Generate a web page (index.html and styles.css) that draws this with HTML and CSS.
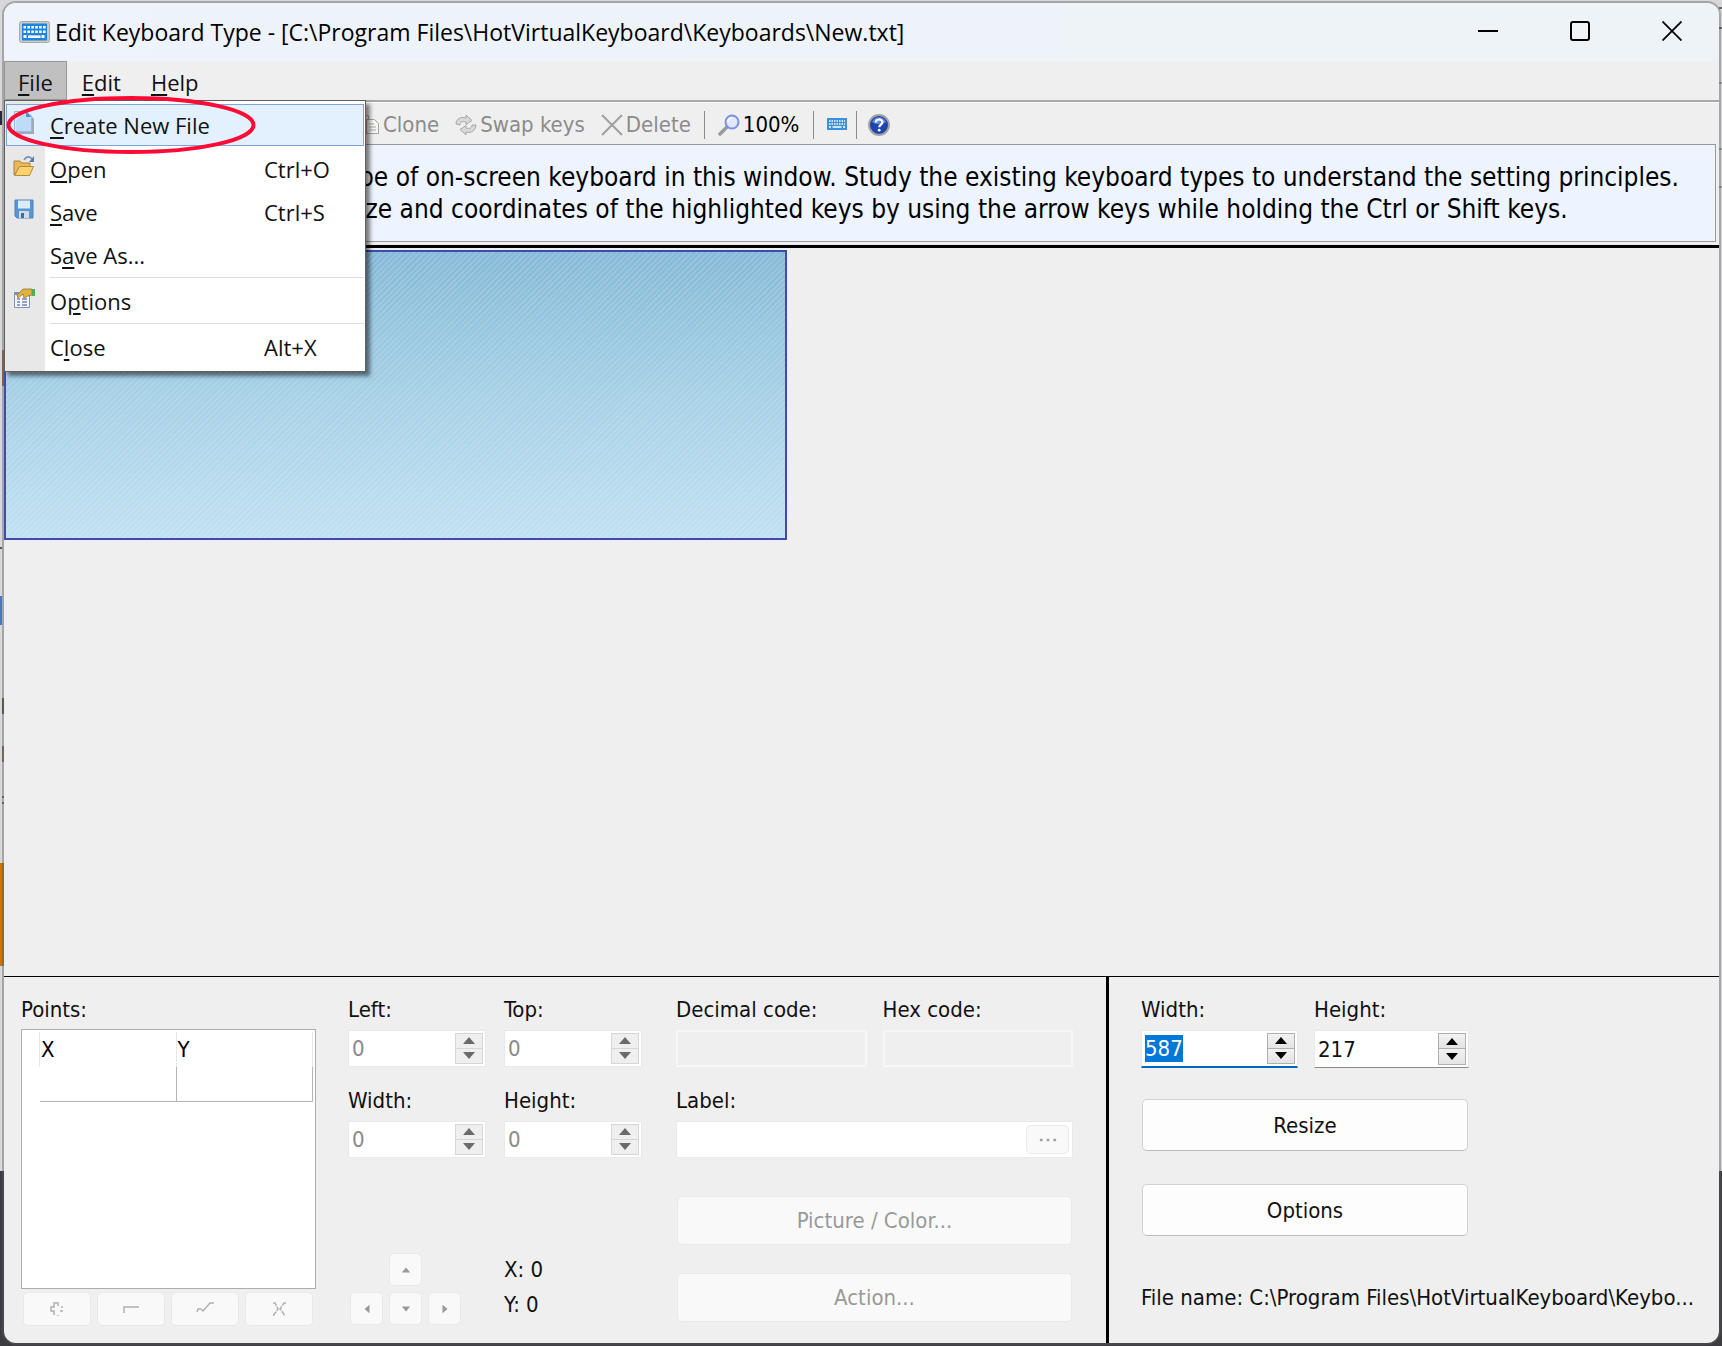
FILE: index.html
```html
<!DOCTYPE html>
<html lang="en">
<head>
<meta charset="utf-8">
<title>Edit Keyboard Type</title>
<link rel="stylesheet" href="styles.css">
</head>
<body>
<main class="window">
  <header class="titlebar">
    <svg class="app-icon" viewBox="0 0 31 22" aria-hidden="true">
      <rect x=".5" y=".5" width="30" height="21" rx="2" fill="#cfc9c2" stroke="#a9a9a9"/>
      <rect x="3" y="2.500" width="25" height="17" fill="#1f83e0"/>
      <g stroke="#fff" stroke-width="2.600" stroke-dasharray="2.600 1.300"><path d="M4.500 6.300h22.500M4.500 10.700h22.500"/></g>
      <path d="M4.500 15.500h3M22.500 15.500h4" stroke="#fff" stroke-width="3" stroke-dasharray="3 1"/>
      <path d="M9 15.700h12.500" stroke="#fff" stroke-width="2.600"/>
    </svg>
    <h1 class="title">Edit Keyboard Type - [C:\Program Files\HotVirtualKeyboard\Keyboards\New.txt]</h1>
    <div class="caption">
      <button type="button" aria-label="Minimize"><svg viewBox="0 0 20 20"><path d="M0 10h20" stroke-width="2"/></svg></button>
      <button type="button" aria-label="Maximize"><svg viewBox="0 0 20 20"><rect x="1" y="1" width="18" height="18" rx="2" stroke-width="2"/></svg></button>
      <button type="button" aria-label="Close window"><svg viewBox="0 0 20 20"><path d="M.5.5l19 19M19.500.5l-19 19" stroke-width="1.800"/></svg></button>
    </div>
  </header>

  <nav class="menubar">
    <div class="menu-root">
      <button type="button" class="menu-title open"><u>F</u>ile</button>
      <ul class="popup">
        <li><button type="button" class="item active">
          <svg class="ico" viewBox="0 0 24 24"><path d="M5 3h13l4 5v15H5z" fill="#a4a9b8"/><path d="M2.500.5h12l5 5v15h-17z" fill="#d9ebfb" stroke="#9cb6de"/><path d="M4 9l8-7 3 4 4 1v13H4z" fill="#bfdcf7"/><path d="M14 .5v5.500h5.500z" fill="#4b8fd8"/></svg>
          <span><u>C</u>reate New File</span></button>
          <svg class="highlight-ring" viewBox="0 0 250 60" aria-hidden="true"><ellipse cx="125" cy="30" rx="122.500" ry="27" fill="none" stroke="#fd0a35" stroke-width="4"/></svg>
        </li>
        <li><button type="button" class="item">
          <svg class="ico" viewBox="0 0 24 24"><path d="M2 20V6h6l2 2h8v4H8z" fill="#e9b95a" stroke="#b08435"/><path d="M2.500 20.500l5-9h14l-4 9z" fill="#fbd36c" stroke="#b58a3c"/><path d="M12 5c2-4 6-4 8-1" fill="none" stroke="#6f8fb8" stroke-width="1.600"/><path d="M22 1v6h-5z" fill="#587ba8"/></svg>
          <span><u>O</u>pen</span><kbd>Ctrl+O</kbd></button></li>
        <li><button type="button" class="item">
          <svg class="ico" viewBox="0 0 24 24"><path d="M3 2h18v18H5l-2-2z" fill="#5795d3" stroke="#4c84bd"/><path d="M6 2.500h12v8H6z" fill="#dcebf8"/><path d="M7 13h10v7H7z" fill="#d5dbe3"/><path d="M9 15h3v5H9z" fill="#3d6ea8"/></svg>
          <span><u>S</u>ave</span><kbd>Ctrl+S</kbd></button></li>
        <li><button type="button" class="item"><i class="ico"></i><span>S<u>a</u>ve As...</span></button></li>
        <li class="rule"></li>
        <li><button type="button" class="item">
          <svg class="ico" viewBox="0 0 24 24"><path d="M2.500 5.500h15v15h-15z" fill="#f2f6fc" stroke="#7f92b5"/><path d="M2 5h16v3H2z" fill="#7c93c2"/><path d="M5 12h3M10 12h5M5 15h3M10 15h5M5 18h3M10 18h5" stroke="#6f86ad" stroke-width="1.400"/><path d="M5 8l6-6h9v6l-4 1-4 2-1-4-5 4z" fill="#e0b040" stroke="#9b762a" stroke-width=".8"/><path d="M20 2h3v7h-3z" fill="#4caf50"/></svg>
          <span>O<u>p</u>tions</span></button></li>
        <li class="rule"></li>
        <li><button type="button" class="item"><i class="ico"></i><span>C<u>l</u>ose</span><kbd>Alt+X</kbd></button></li>
      </ul>
    </div>
    <button type="button" class="menu-title"><u>E</u>dit</button>
    <button type="button" class="menu-title"><u>H</u>elp</button>
  </nav>

  <div class="toolbar">
    <button type="button" disabled><svg viewBox="0 0 22 22"><path d="M2.500 1.500h8v14h-8z" fill="#eee" stroke="#aaa"/><path d="M8.500 5.500h8l4 4v10h-12z" fill="#f4f4f4" stroke="#a5a5a5"/><path d="M11 10h5M11 13h7M11 16h7" stroke="#aaa"/></svg>Clone</button>
    <button type="button" disabled><svg viewBox="0 0 22 22"><g fill="#d8d8d8" stroke="#a2a2a2" stroke-width=".9" stroke-linejoin="round"><path d="M1 10c0-5 5-8 10-6V1l6 5.500-6 4V8c-4-1-6 0-6 3z"/><path d="M21 11c0 5-5 9-10 7v3l-6-5.500 6-4V14c4 1 6 0 6-3z"/></g></svg>Swap keys</button>
    <button type="button" disabled><svg viewBox="0 0 22 22"><path d="M1 1l20 20M21 1L1 21" fill="none" stroke="#a0a0a0" stroke-width="2"/></svg>Delete</button>
    <i class="sep"></i>
    <button type="button"><svg viewBox="0 0 22 22"><path d="M2 20l7-7" stroke="#9a9a9a" stroke-width="3.500" stroke-linecap="round"/><circle cx="14" cy="8" r="6.500" fill="#dfe8fc" stroke="#7d8fe6" stroke-width="2"/><path d="M10 8a4 4 0 0 1 4-4" fill="none" stroke="#fff" stroke-width="1.500"/></svg>100%</button>
    <i class="sep wide"></i>
    <button type="button" aria-label="Keyboard"><svg viewBox="0 0 22 22"><path d="M1 4h20v12H1z" fill="#3b8fdb"/><g stroke="#fff" stroke-width="1.400" stroke-dasharray="1.500 1"><path d="M3 7h16M3 10h16"/></g><path d="M3 13h2M6.500 13h9M17 13h2" stroke="#fff" stroke-width="1.400"/></svg></button>
    <i class="sep last"></i>
    <button type="button" aria-label="Help contents"><svg viewBox="0 0 22 22"><circle cx="11" cy="11" r="10" fill="#1e44ac" stroke="#a3a3a8" stroke-width="2"/><path d="M4 8a7.500 7.500 0 0 1 14 0c-4 3-10 3-14 0z" fill="#5d86dc"/><path d="M7.800 8.600c0-4.200 6.600-4 6.600-.4 0 2.400-3.200 2.300-3.200 5" fill="none" stroke="#fff" stroke-width="2.200"/><circle cx="11.200" cy="16.200" r="1.400" fill="#fff"/></svg></button>
  </div>

  <p class="hint">pe of on-screen keyboard in this window. Study the existing keyboard types to understand the setting principles.<br>ize and coordinates of the highlighted keys by using the arrow keys while holding the Ctrl or Shift keys.</p>

  <section class="canvas"><div class="keyboard"></div></section>

  <section class="panes">
    <form class="editor">
      <div class="points">
        <span class="label">Points:</span>
        <div class="grid-box">
          <table>
            <thead><tr><th>X</th><th>Y</th></tr></thead>
            <tbody><tr><td></td><td></td></tr></tbody>
          </table>
        </div>
        <div class="point-tools">
          <button type="button" class="btn" disabled aria-label="Add"><svg viewBox="0 0 20 20"><path d="M7 16v-4H4v-4h3V4h4v3M14 8h2M11 16v1M13 12h3"/></svg></button>
          <button type="button" class="btn" disabled aria-label="Remove"><svg viewBox="0 0 20 20"><path d="M3 14V8h15"/></svg></button>
          <button type="button" class="btn" disabled aria-label="Apply"><svg viewBox="0 0 20 20"><path d="M2 13l1-3h3l2 2 7-8h4"/></svg></button>
          <button type="button" class="btn" disabled aria-label="Cancel"><svg viewBox="0 0 20 20"><path d="M4 4h2l3 6-5 7M17 4h-2l-4 6 4 5v2" stroke-dasharray="5 1"/></svg></button>
        </div>
      </div>

      <div class="geometry">
        <div class="pair">
          <label class="field">Left:<span class="spin off"><input value="0" disabled><span class="steps"><button type="button" disabled aria-label="Up"></button><button type="button" disabled aria-label="Down"></button></span></span></label>
          <label class="field">Top:<span class="spin off"><input value="0" disabled><span class="steps"><button type="button" disabled aria-label="Up"></button><button type="button" disabled aria-label="Down"></button></span></span></label>
          <label class="field">Width:<span class="spin off"><input value="0" disabled><span class="steps"><button type="button" disabled aria-label="Up"></button><button type="button" disabled aria-label="Down"></button></span></span></label>
          <label class="field">Height:<span class="spin off"><input value="0" disabled><span class="steps"><button type="button" disabled aria-label="Up"></button><button type="button" disabled aria-label="Down"></button></span></span></label>
        </div>
        <div class="move">
          <div class="arrows">
            <button type="button" class="btn up" disabled aria-label="Move up"><svg viewBox="0 0 12 12"><path d="M1 9l5-6 5 6z"/></svg></button>
            <button type="button" class="btn left" disabled aria-label="Move left"><svg viewBox="0 0 12 12"><path d="M9 1L3 6l6 5z"/></svg></button>
            <button type="button" class="btn" disabled aria-label="Move down"><svg viewBox="0 0 12 12"><path d="M1 3l5 6 5-6z"/></svg></button>
            <button type="button" class="btn" disabled aria-label="Move right"><svg viewBox="0 0 12 12"><path d="M3 1l6 5-6 5z"/></svg></button>
          </div>
          <div class="position"><span>X: 0</span><span>Y: 0</span></div>
        </div>
      </div>

      <div class="key">
        <div class="codes">
          <label class="field">Decimal code:<input class="flat" disabled></label>
          <label class="field">Hex code:<input class="flat" disabled></label>
        </div>
        <div class="field"><label for="key-label">Label:</label>
          <span class="combo"><input id="key-label" disabled><button type="button" class="btn dots" disabled aria-label="More"><svg viewBox="0 0 20 4"><path d="M1 .5h3v3H1zM8.500 .5h3v3h-3zM16 .5h3v3h-3z"/></svg></button></span>
        </div>
        <div class="actions">
          <button type="button" class="btn" disabled>Picture / Color...</button>
          <button type="button" class="btn" disabled>Action...</button>
        </div>
      </div>
    </form>

    <form class="size">
      <div class="pair">
        <label class="field">Width:<span class="spin focus"><input id="kb-width" value="587"><span class="steps"><button type="button" aria-label="Up"></button><button type="button" aria-label="Down"></button></span></span></label>
        <label class="field">Height:<span class="spin"><input value="217"><span class="steps"><button type="button" aria-label="Up"></button><button type="button" aria-label="Down"></button></span></span></label>
      </div>
      <div class="commands">
        <button type="button" class="btn">Resize</button>
        <button type="button" class="btn">Options</button>
      </div>
      <p class="filename">File name: C:\Program Files\HotVirtualKeyboard\Keybo...</p>
    </form>
  </section>
</main>
<script src="main.js"></script>
</body>
</html>
```
FILE: main.js
```js
// The width field starts focused with its value selected.
const width = document.getElementById('kb-width');
width.focus();
width.select();
```
FILE: styles.css
```css
* { box-sizing: border-box; }
body {
  margin: 0;
  min-height: 100vh;
  padding: 3px 3px 3px 4px;
  display: flex;
  color: #111;
  font: 22px/27px "DejaVu Sans Condensed", "DejaVu Sans", sans-serif;
  background:
    linear-gradient(#0000 111px, #1f2b40 111px 125px, #0000 125px 547px, #555 547px 549px, #0000 549px 596px, #4a78c0 596px 625px, #0000 625px 863px, #d07400 863px 966px, #0000 966px) 0 0 / 2px 100% no-repeat,
    linear-gradient(#0000 350px, #9a6a48 350px 386px, #0000 386px 698px, #5b5840 698px 714px, #0000 714px 746px, #8a6a55 746px 762px, #0000 762px 796px, #666 796px 798px, #0000 798px 802px, #666 802px 804px, #0000 804px 863px, #c87000 863px 966px, #0000 966px) 2px 0 / 2px 100% no-repeat,
    linear-gradient(#0000 7px, #666 7px 9px, #0000 9px 27px, #666 27px 29px, #0000 29px 82px, #999 82px 84px, #0000 84px 148px, #999 148px 150px, #0000 150px 186px, #999 186px 188px, #0000 188px) 100% 0 / 3px 100% no-repeat,
    linear-gradient(#d8d8da 87%, #3d3c41 87%);
}
button, input { font: inherit; color: inherit; margin: 0; padding: 0; border: 0; background: none; }
h1, p, ul { margin: 0; padding: 0; font-weight: 400; }
u { text-decoration-thickness: 2px; text-underline-offset: 3px; }
svg { display: block; flex: none; }

.window {
  flex: 1;
  min-width: 0;
  display: flex;
  flex-direction: column;
  background: #efefef;
  border-radius: 12px;
  box-shadow: 0 0 0 2px rgba(90, 90, 90, .4);
}

.titlebar {
  height: 58px;
  padding-left: 15px;
  display: flex;
  align-items: center;
  gap: 5px;
  background: linear-gradient(90deg, #eef3fc, #edf3f6);
  border-radius: 12px 12px 0 0;
}
.app-icon { width: 31px; height: 22px; }
.title { flex: 1; font: 23px/32px "Open Sans", "Noto Sans", sans-serif; color: #000; white-space: nowrap; }
.caption { display: flex; margin-right: 1px; }
.caption button { width: 92px; height: 54px; padding-bottom: 2px; display: grid; place-items: center; }
.caption svg { width: 20px; height: 20px; fill: none; stroke: #000; }

.menubar {
  height: 41px;
  display: flex;
  align-items: flex-start;
  border-bottom: 2px solid #a9a9a9;
  font: 22px/30px "Open Sans", "Noto Sans", sans-serif;
}
.menu-root { position: relative; }
.menu-title { height: 39px; padding: 2px 14px 0; display: block; border: 1px solid transparent; }
.menu-title.open { padding: 2px 13px 0; background: #c0c0c0; border-color: #979797; }
.popup {
  position: absolute;
  z-index: 2;
  top: 39px;
  left: 0;
  width: 362px;
  padding: 3px 1px 3px;
  list-style: none;
  border: 1px solid #5f5f5f;
  background: linear-gradient(90deg, #e8e8e8 40px, #fff 40px);
  box-shadow: 4px 4px 4px rgba(0, 0, 0, .5);
}
.popup li { position: relative; }
.item {
  width: 100%;
  height: 43px;
  padding: 0 2px 0 5px;
  display: grid;
  grid-template-columns: 24px 200px 1fr;
  column-gap: 14px;
  align-items: center;
  text-align: left;
  border: 1px solid transparent;
}
.item kbd { font: inherit; }
.item.active { background: #e3f1fe; border-color: #7fa5dc; height: 42px; margin-bottom: 1px; }
.ico { width: 24px; height: 24px; margin-bottom: 4px; }
.rule { height: 3px; margin-left: 44px; background: linear-gradient(#0000 1px, #dedede 1px 2px, #0000 2px); }
.highlight-ring { position: absolute; left: 0; top: -9px; width: 250px; height: 60px; }

.toolbar {
  height: 42px;
  padding: 2px 0 0 346px;
  display: flex;
  align-items: center;
  border-top: 1px solid #fafafa;
  color: #000;
}
.toolbar button { display: flex; align-items: center; gap: 3px; padding: 0 8px; }
.toolbar button:disabled { color: #8b8b8b; }
.toolbar svg { width: 22px; height: 22px; }
.toolbar .sep { width: 1px; height: 28px; margin: 0 5px; background: #8c8c8c; }
.toolbar .wide { margin: 0 4px 0 6px; }
.toolbar .last { margin: 0 3px 0 0; }

.hint {
  margin-right: 3px;
  padding: 16px 0 16px 354px;
  border: 1px solid #9a9a9a;
  background: #edf4ff;
  color: #000;
  font-size: 26px;
  line-height: 32px;
  white-space: nowrap;
}

.canvas {
  flex: 1;
  margin-top: 3px;
  padding-top: 2px;
  border-top: 3px solid #000;
  border-bottom: 1px solid #000;
}
.keyboard {
  width: 783px;
  height: 290px;
  border: 2px solid #4149b3;
  background:
    repeating-linear-gradient(135deg, rgba(255, 255, 255, .13) 0 2px, rgba(255, 255, 255, 0) 2px 4px),
    linear-gradient(#85b9d7, #a5d0e6 50%, #c0e0f1);
}

.panes { display: flex; }
.editor, .size { padding: 19px 0 17px; }
.editor { flex: 1; min-width: 0; display: flex; gap: 32px; padding-left: 17px; padding-right: 33px; border-right: 3px solid #000; }
.field { display: flex; flex-direction: column; gap: 7px; min-width: 0; }

.points { width: 295px; }
.points .label { display: block; margin-bottom: 6px; }
.grid-box { height: 260px; padding: 2px 2px 0 17px; background: #fff; border: 1px solid #acacb0; }
table { width: 100%; border-collapse: collapse; table-layout: fixed; color: #000; }
th { height: 35px; padding: 0 0 0 1px; text-align: left; vertical-align: middle; font-weight: 400; border: 1px solid #e6e6e6; border-width: 0 1px; }
td { height: 34px; border: 1px solid #b4b4b8; border-width: 0 1px 1px 1px; }
td:first-child { border-left: 0; }
.point-tools { display: grid; grid-template-columns: repeat(4, 1fr); gap: 6px; padding: 3px 3px 0 2px; }
.point-tools .btn { height: 34px; }
.point-tools svg { width: 20px; height: 20px; fill: none; stroke: #b0b0b0; stroke-width: 1.500; }

.btn {
  display: grid;
  place-items: center;
  border: 1px solid #d2d2d2;
  border-bottom-color: #bcbcbc;
  border-radius: 5px;
  background: #fdfdfd;
}
.btn:disabled { background: #f9f9f9; border-color: #e9e9e9; color: #999; }

.geometry { width: 296px; display: flex; flex-direction: column; }
.pair { display: grid; grid-template-columns: 138px 138px; gap: 20px 18px; }
.spin { display: flex; height: 37px; padding: 2px 2px 2px 1px; background: #fff; border: 1px solid #e9e9e9; }
.spin input { flex: 1; width: 0; outline: 0; padding-left: 2px; }
.spin.off input { color: #8a8a8a; }
.steps { display: grid; grid-template-rows: 1fr 1fr; width: 28px; }
.steps button { display: grid; place-items: center; border: 1px solid #b0b0b0; background: linear-gradient(#f2f2f2, #e4e4e4); }
.steps button + button { border-top: 0; }
.steps button::before { content: ""; border: 6px solid transparent; border-top: 0; border-bottom: 7px solid #000; }
.steps button + button::before { border-bottom: 0; border-top: 7px solid #000; }
.off .steps button { border-color: #d6d6d6; background: #efefef; }
.off .steps button::before { border-bottom-color: #6b6b6b; }
.off .steps button + button::before { border-top-color: #6b6b6b; }

.move { display: grid; grid-template-columns: 138px 138px; column-gap: 18px; margin-top: 94px; }
.arrows { display: grid; grid-template-columns: repeat(3, 33px); grid-auto-rows: 33px; gap: 6px; padding-left: 2px; padding-top: 1px; }
.arrows .up { grid-column: 2; }
.arrows .left { grid-column: 1; }
.arrows svg { width: 10px; height: 10px; fill: #999; }
.position { display: flex; flex-direction: column; line-height: 35px; }

.key { flex: 1; min-width: 0; display: flex; flex-direction: column; gap: 20px; }
.codes { display: grid; grid-template-columns: 1fr 1fr; gap: 16px; }
.flat { width: 100%; height: 37px; border: 2px solid #f7f7f7; background: #efefef; }
.combo { display: flex; height: 37px; padding: 3px; background: #fff; border: 1px solid #e9e9e9; }
.combo input { flex: 1; width: 0; }
.dots { width: 43px; }
.dots svg { width: 18px; height: 4px; fill: #a0a0a0; }
.actions { display: grid; gap: 28px; padding: 18px 1px 0; }
.actions .btn { height: 49px; }

.size { width: 610px; padding-left: 32px; }
.size .pair { grid-template-columns: 157px 155px; column-gap: 16px; }
.size .spin { height: 38px; border-bottom-color: #8a8a8a; }
.size .spin.focus { border-bottom: 2px solid #0067c0; }
.size input::selection { background: #0078d7; color: #fff; }
.commands { width: 328px; display: grid; gap: 33px; padding: 31px 1px 0; }
.commands .btn { height: 52px; }
.filename { margin-top: 48px; white-space: nowrap; overflow: hidden; }
```
